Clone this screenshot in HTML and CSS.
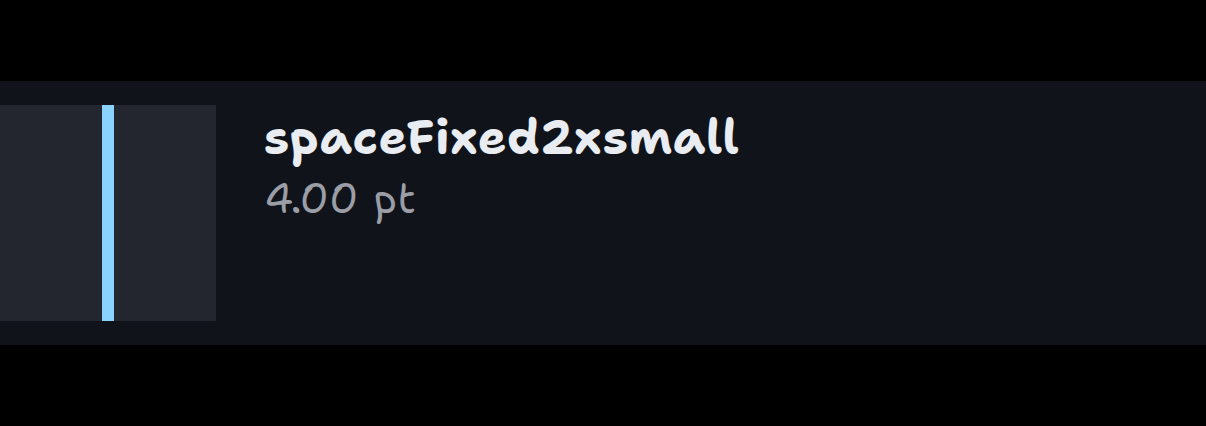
FILE: index.html
```html
<!DOCTYPE html>
<html lang="en">
<head>
<meta charset="utf-8">
<title>Spacing tokens</title>
<link rel="stylesheet" href="styles.css">
</head>
<body>
<main class="token-row">
  <div class="preview"><div class="preview-bar"></div></div>
  <div class="details">
    <h1 class="token-name">spaceFixed2xsmall</h1>
    <p class="token-value">4.00 pt</p>
  </div>
</main>
</body>
</html>
```

FILE: styles.css
```css
body {
  margin: 0;
  height: 426px;
  overflow: hidden;
  background: #000;
  display: flex;
  align-items: center;
  font-family: "Shantell Sans", "Lato", sans-serif;
}

.token-row {
  box-sizing: border-box;
  width: 100%;
  height: 264px;
  padding: 24px 0;
  display: flex;
  gap: 48px;
  background: #10131a;
}

.preview {
  width: 216px;
  height: 216px;
  display: flex;
  justify-content: center;
  background: #23262e;
}

.preview-bar {
  width: 12px;
  background: #8bd3ff;
}

.details {
  padding-top: 2px;
}

.token-name {
  margin: 0;
  height: 60px;
  font-size: 48px;
  line-height: 60px;
  font-weight: 700;
  letter-spacing: 0.5px;
  color: #e9ecf1;
}

.token-value {
  margin: 0;
  height: 60px;
  font-size: 42px;
  line-height: 62px;
  font-weight: 400;
  letter-spacing: 0.4px;
  color: #9b9ea6;
}
```
